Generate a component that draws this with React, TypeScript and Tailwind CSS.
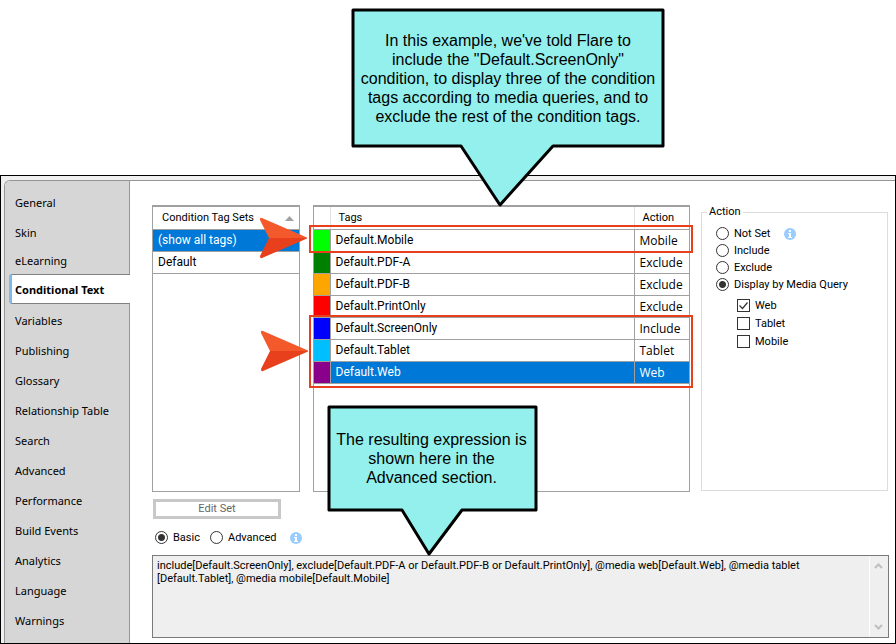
import React, { useState } from "react";

const sections = [
  "General",
  "Skin",
  "eLearning",
  "Conditional Text",
  "Variables",
  "Publishing",
  "Glossary",
  "Relationship Table",
  "Search",
  "Advanced",
  "Performance",
  "Build Events",
  "Analytics",
  "Language",
  "Warnings",
];

const tags = [
  { name: "Default.Mobile", action: "Mobile", color: "bg-[#00ff00]" },
  { name: "Default.PDF-A", action: "Exclude", color: "bg-[#008000]" },
  { name: "Default.PDF-B", action: "Exclude", color: "bg-[#ffa500]" },
  { name: "Default.PrintOnly", action: "Exclude", color: "bg-[#ff0000]" },
  { name: "Default.ScreenOnly", action: "Include", color: "bg-[#0000ff]" },
  { name: "Default.Tablet", action: "Tablet", color: "bg-[#00bfff]" },
  { name: "Default.Web", action: "Web", color: "bg-[#8b008b]", selected: true },
];

const expression =
  "include[Default.ScreenOnly], exclude[Default.PDF-A or Default.PDF-B or Default.PrintOnly], @media web[Default.Web], @media tablet\n[Default.Tablet], @media mobile[Default.Mobile]";

function InfoIcon() {
  return (
    <svg width="12" height="12" viewBox="0 0 12 12" className="shrink-0" aria-hidden="true">
      <circle cx="6" cy="6" r="6" fill="#99ccff" />
      <path d="M5 2h2v2H5zM4 5h3v4h1v1H4V9h1V6H4z" fill="#fff" />
    </svg>
  );
}

function Radio(props: { name: string; label: string; checked: boolean; onPick: () => void }) {
  return (
    <label className="flex h-[17px] items-center gap-[5px]">
      <input
        type="radio"
        name={props.name}
        checked={props.checked}
        onChange={props.onPick}
        className="h-[13px] w-[13px] shrink-0 appearance-none rounded-full border border-[#333] bg-white checked:bg-[radial-gradient(circle,#333_0_3px,#fff_4px)]"
      />
      <span className="whitespace-nowrap">{props.label}</span>
    </label>
  );
}

function Check(props: { label: string; initial?: boolean }) {
  const [on, setOn] = useState(!!props.initial);
  return (
    <label className="relative flex h-[17px] items-center gap-[5px]">
      <input
        type="checkbox"
        checked={on}
        onChange={() => setOn(!on)}
        className="h-[13px] w-[13px] shrink-0 appearance-none border border-[#333] bg-white"
      />
      {on && (
        <svg width="13" height="13" viewBox="0 0 13 13" className="pointer-events-none absolute left-0 top-[2px]" aria-hidden="true">
          <path d="M2.500 6.500l3 3 5-6" fill="none" stroke="#333" strokeWidth="1.200" />
        </svg>
      )}
      <span>{props.label}</span>
    </label>
  );
}

function Pointer({ className }: { className: string }) {
  return (
    <svg width="50" height="42" viewBox="0 0 50 42" className={"pointer-events-none absolute " + className} aria-hidden="true">
      <path d="M1 2Q1 0 3 1L48 20.500V21H10L1 3z" fill="#f4592b" />
      <path d="M1 39Q1 42 3 41L48 21.500V21H10z" fill="#e8401c" />
    </svg>
  );
}

export default function App() {
  const [action, setAction] = useState("Display by Media Query");
  const [mode, setMode] = useState("Basic");

  return (
    <div className="relative bg-white pt-[175px] font-['Roboto',sans-serif] text-[11px] leading-[14px] text-black">
      <main className="border border-black bg-[#f0f0f0] pl-[3px] pt-1">
        <div className="flex overflow-hidden rounded-tl-[6px] border-l border-t border-[#969696] bg-white">
          <nav className="w-[125px] shrink-0 border-r border-[#969696] bg-[#d6d6d6] pb-[5px] pt-[7px] font-['Noto_Sans',sans-serif]">
            <ul>
              {sections.map((s) =>
                s === "Conditional Text" ? (
                  <li key={s} className="-mr-px mb-[2px] ml-1">
                    <a href="#conditional" aria-current="page" className="flex h-[30px] items-center rounded-l-[3px] border-y border-l-[3px] border-y-[#808080] border-l-[#7fb9ec] bg-white pl-[3px] pt-px text-[11px] font-bold">
                      {s}
                    </a>
                  </li>
                ) : (
                  <li key={s}>
                    <a href="#section" className={(s === "eLearning" ? "h-[26px]" : "h-[30px]") + " flex items-center pl-[10px]"}>
                      {s}
                    </a>
                  </li>
                ),
              )}
            </ul>
          </nav>

          <div className="min-w-0 flex-1 pb-[5px] pl-[22px] pr-[6px] pt-[24px]">
            <div className="grid h-[287px] grid-cols-[148px_minmax(0,1fr)_187px] pr-px">
              <div className="relative border border-t-2 border-[#a0a0a0]">
                <table className="w-full border-collapse text-[12px]">
                  <thead>
                    <tr className="h-[22px] text-[11px]">
                      <th className="border-b border-[#a0a0a0] p-0 pl-[9px] pt-px text-left font-normal">
                        <span className="flex items-center justify-between pr-[5px]">
                          Condition Tag Sets
                          <svg width="9" height="5" viewBox="0 0 9 5" aria-hidden="true">
                            <path d="M0 5L4.500 0L9 5z" fill="#a0a0a0" />
                          </svg>
                        </span>
                      </th>
                    </tr>
                  </thead>
                  <tbody>
                    <tr className="h-[22px] bg-[#0078d7] text-white">
                      <td className="border-b border-[#a0a0a0] p-0 pl-[5px]">(show all tags)</td>
                    </tr>
                    <tr className="h-[22px]">
                      <td className="border-b border-[#a0a0a0] p-0 pl-[5px]">Default</td>
                    </tr>
                  </tbody>
                </table>
                <Pointer className="left-[106px] top-[10px]" />
                <Pointer className="left-[107px] top-[123px]" />
              </div>

              <div className="relative ml-[13px] mr-[11px] border border-t-2 border-[#a0a0a0]">
                <table className="w-full table-fixed border-collapse text-[12px]">
                  <colgroup>
                    <col className="w-[16px]" />
                    <col />
                    <col className="w-[55px]" />
                  </colgroup>
                  <thead>
                    <tr className="h-[22px] text-[11px]">
                      <th className="border-b border-r border-b-[#a0a0a0] border-r-[#e0e0e0] p-0" aria-label="Colour" />
                      <th className="border-b border-r border-b-[#a0a0a0] border-r-[#e0e0e0] p-0 pl-2 pt-px text-left font-normal">Tags</th>
                      <th className="border-b border-[#a0a0a0] p-0 pl-2 pt-px text-left font-normal">Action</th>
                    </tr>
                  </thead>
                  <tbody>
                    {tags.map((t) => (
                      <tr key={t.name} className={"h-[22px] " + (t.selected ? "bg-[#0078d7] text-white" : "bg-white")}>
                        <td className={"border-b border-r border-[#a0a0a0] p-0 " + t.color} />
                        <td className="border-b border-r border-[#a0a0a0] p-0 pl-[5px]">{t.name}</td>
                        <td className="border-b border-[#a0a0a0] p-0 pl-[5px] pt-px font-['Open_Sans',sans-serif]">{t.action}</td>
                      </tr>
                    ))}
                  </tbody>
                </table>
                <div className="pointer-events-none absolute -left-[5px] -right-[4px] top-[18px] h-[28px] border-2 border-[#e8401c]" />
                <div className="pointer-events-none absolute -left-[5px] -right-[4px] top-[108px] h-[73px] border-2 border-[#e8401c]" />
              </div>

              <fieldset className="mb-px border border-[#dcdcdc] px-[14px]">
                <legend className="-ml-[9px] px-[2px]">Action</legend>
                <div className="flex flex-col pt-[6px]">
                  <div className="flex items-center gap-[14px]">
                    <Radio name="action" label="Not Set" checked={action === "Not Set"} onPick={() => setAction("Not Set")} />
                    <InfoIcon />
                  </div>
                  {["Include", "Exclude", "Display by Media Query"].map((a) => (
                    <Radio key={a} name="action" label={a} checked={action === a} onPick={() => setAction(a)} />
                  ))}
                  <div className="mt-1 flex flex-col gap-px pl-[21px]">
                    <Check label="Web" initial />
                    <Check label="Tablet" />
                    <Check label="Mobile" />
                  </div>
                </div>
              </fieldset>
            </div>

            <button type="button" className="ml-px mt-[7px] block h-5 w-[128px] border-[3px] border-[#c8c8c8] bg-white text-[#666]">
              Edit Set
            </button>

            <div className="mt-[10px] flex items-center gap-[14px] pl-[3px]">
              <div className="flex gap-[10px]">
                <Radio name="mode" label="Basic" checked={mode === "Basic"} onPick={() => setMode("Basic")} />
                <Radio name="mode" label="Advanced" checked={mode === "Advanced"} onPick={() => setMode("Advanced")} />
              </div>
              <InfoIcon />
            </div>

            <div className="mt-[9px] flex h-[83px] border border-[#7a7a7a] bg-[#efefef] p-px">
              <textarea aria-label="Expression" readOnly value={expression} className="min-w-0 flex-1 resize-none overflow-hidden px-[3px] pt-[2px] leading-[13px] outline-none" />
              <div className="flex w-[18px] shrink-0 flex-col items-center justify-between border-l border-white py-[6px]">
                <svg width="9" height="6" viewBox="0 0 9 6" aria-hidden="true">
                  <path d="M1 5L4.500 1.500L8 5" fill="none" stroke="#bfbfbf" strokeWidth="2" />
                </svg>
                <svg width="9" height="6" viewBox="0 0 9 6" aria-hidden="true">
                  <path d="M1 1L4.500 4.500L8 1" fill="none" stroke="#bfbfbf" strokeWidth="2" />
                </svg>
              </div>
            </div>
          </div>
        </div>
      </main>

      <aside className="absolute left-[350px] top-[8px] h-[200px] w-[316px]">
        <svg width="316" height="200" viewBox="0 0 316 200" className="absolute inset-0" aria-hidden="true">
          <path d="M3 2H313V138H203L150 197L111 138H3z" fill="#94f0ec" stroke="#000" strokeWidth="3" strokeLinejoin="round" />
        </svg>
        <p className="relative pt-[23px] text-center font-['Liberation_Sans',Arial,sans-serif] text-[16px] leading-[19px]">
          In this example, we've told Flare to
          <br />
          include the "Default.ScreenOnly"
          <br />
          condition, to display three of the condition
          <br />
          tags according to media queries, and to
          <br />
          exclude the rest of the condition tags.
        </p>
      </aside>

      <aside className="absolute left-[326px] top-[405px] h-[152px] w-[211px]">
        <svg width="213" height="152" viewBox="0 0 213 152" className="absolute inset-0" aria-hidden="true">
          <path d="M3 2H210V105H136L103 149L76 105H3z" fill="#94f0ec" stroke="#000" strokeWidth="3" strokeLinejoin="round" />
        </svg>
        <p className="relative pt-[25px] text-center font-['Liberation_Sans',Arial,sans-serif] text-[16px] leading-[19px]">
          The resulting expression is
          <br />
          shown here in the
          <br />
          Advanced section.
        </p>
      </aside>
    </div>
  );
}
